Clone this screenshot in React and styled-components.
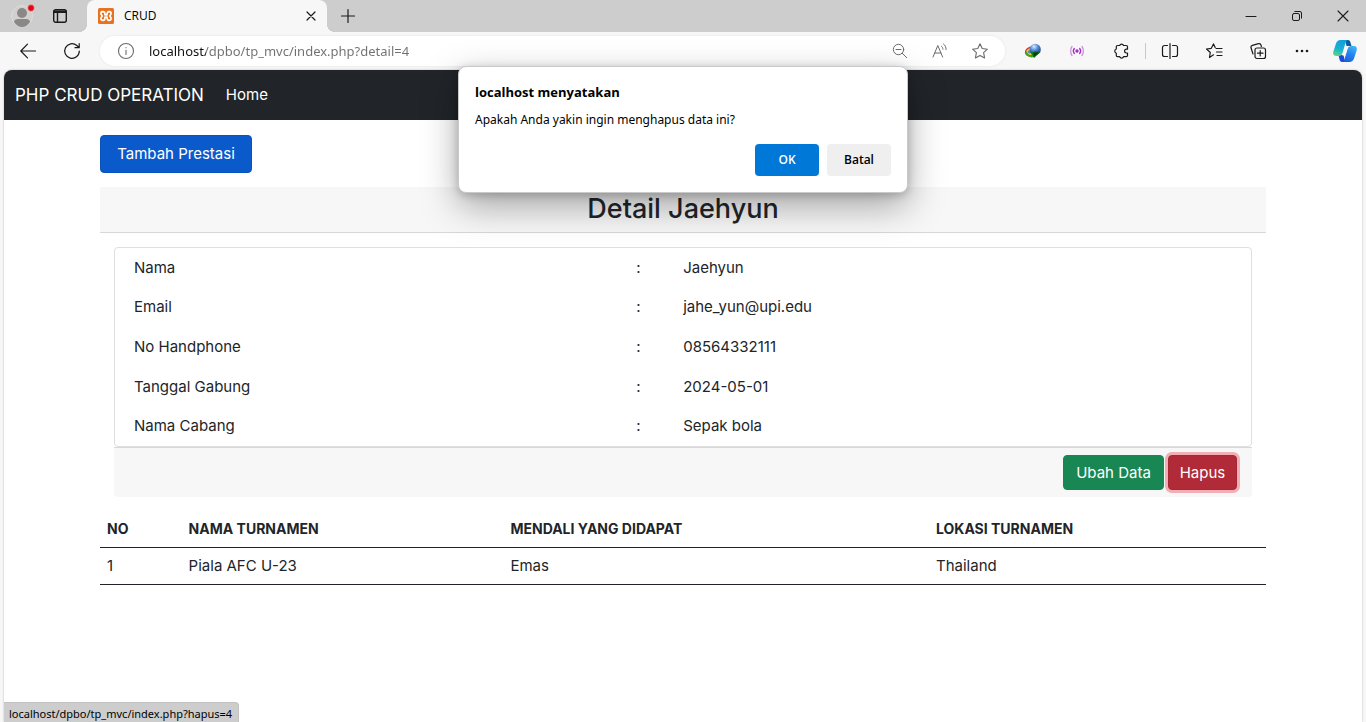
import React from "react";
import styled, { createGlobalStyle, css } from "styled-components";

const Global = createGlobalStyle`
  *, *::before, *::after { box-sizing: border-box; }
  body { margin: 0; background: #f7f7f7; }
  button, input { font: inherit; }
`;

const pageFont = css`font-family: Inter, "Open Sans", sans-serif;`;
const wideUiFont = css`font-family: "Noto Sans", "Open Sans", sans-serif;`;

const Window = styled.div`
  display: flex;
  flex-direction: column;
  min-height: 100vh;
  position: relative;
  overflow: hidden;
  font-family: "Open Sans", "Noto Sans", sans-serif;
  font-size: 12px;
  color: #000;
`;

const TabStrip = styled.header`
  display: flex;
  height: 32px;
  background: #cdcdcd;
`;

const StripButtons = styled.div`
  display: flex;
  width: 87px;
  padding-left: 3px;
`;

const IconButton = styled.button`
  display: flex;
  align-items: center;
  justify-content: center;
  flex: none;
  width: ${(p) => p.$w || 44}px;
  height: 100%;
  padding: 0;
  border: 0;
  background: transparent;
  color: ${(p) => p.$color || "#1b1b1b"};
  svg { display: block; overflow: visible; }
`;

const Tab = styled.div`
  display: flex;
  align-items: center;
  width: 240px;
  padding-left: 11px;
  position: relative;
  background: #f7f7f7;
  border-radius: 8px 8px 0 0;
  &::before, &::after {
    content: "";
    position: absolute;
    bottom: 0;
    width: 8px;
    height: 8px;
  }
  &::before { left: -8px; background: radial-gradient(circle at 0 0, transparent 8px, #f7f7f7 8px); }
  &::after { right: -8px; background: radial-gradient(circle at 100% 0, transparent 8px, #f7f7f7 8px); }
`;

const TabTitle = styled.span`
  flex: 1;
  margin-left: 10px;
  line-height: 32px;
`;

const WindowControls = styled.div`
  display: flex;
  margin-left: auto;
`;

const Toolbar = styled.div`
  display: flex;
  align-items: center;
  height: 38px;
  padding-left: 6px;
`;

const AddressBar = styled.div`
  display: flex;
  align-items: center;
  flex: 1;
  height: 30px;
  margin: 0 6px;
  padding: 0 5px 0 4px;
  border-radius: 15px;
  background: #fff;
  box-shadow: 0 0 3px rgba(0, 0, 0, 0.08);
`;

const AddressInput = styled.input`
  ${wideUiFont}
  flex: 1;
  min-width: 0;
  height: 30px;
  padding: 0 0 0 1px;
  border: 0;
  outline: 0;
  font-size: 13px;
  color: transparent;
  background: linear-gradient(90deg, #111 58px, #707070 58px);
  background-clip: text;
`;

const Separator = styled.div`
  width: 1px;
  height: 16px;
  margin: 0 2px;
  background: #c8c8c8;
`;

const Viewport = styled.div`
  ${pageFont}
  flex: 1;
  margin: 0 4px;
  overflow: hidden;
  border-radius: 8px 8px 0 0;
  background: #fff;
  box-shadow: 0 0 2px rgba(0, 0, 0, 0.3);
  color: #212529;
  font-size: 15px;
  line-height: 22px;
`;

const Navbar = styled.nav`
  display: flex;
  align-items: center;
  gap: 22px;
  height: 50px;
  padding: 0 11px;
  background: #212529;
`;

const NavLink = styled.a`
  color: #fff;
  text-decoration: none;
  font-size: ${(p) => (p.$brand ? 17 : 15)}px;
`;

const Container = styled.main`
  max-width: 1188px;
  margin: 0 auto;
  padding: 15px 11px;
`;

const Button = styled.button`
  ${pageFont}
  padding: 0 ${(p) => (p.$large ? 14 : 10)}px;
  height: ${(p) => (p.$large ? 38 : 35)}px;
  min-width: ${(p) => p.$min}px;
  border: 1px solid ${(p) => p.$border};
  border-radius: 4px;
  background: ${(p) => p.$bg};
  box-shadow: ${(p) => (p.$ring ? "0 0 0 3px rgba(239, 100, 116, 0.5)" : "none")};
  color: #fff;
  white-space: nowrap;
`;

const Heading = styled.h1`
  margin: 14px 0;
  height: 46px;
  border-bottom: 1px solid #d8d8d8;
  background: #f7f7f7;
  font-size: 27px;
  font-weight: 500;
  line-height: 43px;
  text-align: center;
`;

const Card = styled.section`
  margin: 0 14px 14px;
`;

const CardBody = styled.div`
  padding: 0 10px;
  border: 1px solid #dfdfdf;
  border-radius: 4px;
`;

const DetailTable = styled.table`
  width: 100%;
  height: 198px;
  border-collapse: collapse;
  table-layout: fixed;
  th, td {
    padding: 0 9px;
    text-align: left;
    font-weight: 400;
  }
  th { width: 45%; }
  td:nth-child(2) { width: 47px; }
`;

const CardFooter = styled.div`
  display: flex;
  justify-content: flex-end;
  gap: 4px;
  padding: 7px 15px 7px 0;
  border-top: 1px solid #d8d8d8;
  border-radius: 0 0 4px 4px;
  background: #f7f7f7;
`;

const DataTable = styled.table`
  width: 100%;
  border-collapse: collapse;
  table-layout: fixed;
  th, td {
    height: 37px;
    padding: 0 7px;
    border-bottom: 1px solid #212529;
    text-align: left;
  }
  th { height: 36px; font-weight: 700; font-size: 14px; }
  th:nth-child(1) { width: 7%; }
  th:nth-child(2) { width: 27.6%; }
  th:nth-child(3) { width: 36.5%; }
`;

const Dialog = styled.dialog`
  position: absolute;
  top: 66px;
  left: 0;
  right: 0;
  width: 450px;
  margin: 0 auto;
  padding: 15px 16px 16px;
  border: 1px solid #c9c9c9;
  border-radius: 8px;
  background: #fff;
  color: #000;
  box-shadow: 0 13px 36px rgba(0, 0, 0, 0.34), 0 2px 10px rgba(0, 0, 0, 0.2);
  line-height: 20px;
`;

const DialogTitle = styled.h2`
  margin: 0 0 8px;
  font-size: 13px;
  font-weight: 700;
`;

const DialogText = styled.p`
  ${wideUiFont}
  margin: 0 0 14px;
`;

const DialogActions = styled.div`
  display: flex;
  justify-content: flex-end;
  gap: 8px;
`;

const DialogButton = styled.button`
  width: 64px;
  height: 32px;
  padding: 0;
  border: 0;
  border-radius: 4px;
  background: ${(p) => (p.$primary ? "#0078d7" : "#efefef")};
  color: ${(p) => (p.$primary ? "#fff" : "#000")};
  font-size: 12px;
  font-weight: 600;
`;

const StatusBubble = styled.div`
  ${wideUiFont}
  position: absolute;
  left: 4px;
  bottom: 0;
  height: 20px;
  padding: 0 6px 0 5px;
  border: 1px solid #c2c2c2;
  border-width: 1px 1px 0 0;
  border-radius: 0 4px 0 0;
  background: #cdcdcd;
  font-size: 11px;
  line-height: 22px;
`;

const Line = ({ size = 16, sw = 1, children }) => (
  <svg width={size} height={size} viewBox={`0 0 ${size} ${size}`} fill="none" stroke="currentColor" strokeWidth={sw} strokeLinecap="round" strokeLinejoin="round" aria-hidden="true">
    {children}
  </svg>
);

const ProfileIcon = () => (
  <svg width="22" height="22" viewBox="0 0 22 22" aria-hidden="true">
    <circle cx="11" cy="11" r="10.5" fill="#d2d0ce" stroke="#dedbd8" />
    <circle cx="11" cy="8" r="5" fill="#8a8886" />
    <path d="M3 17c0-2 2-3 4-3h8c2 0 4 1 4 3-2 3-5 5-8 5s-6-2-8-5z" fill="#8a8886" />
    <circle cx="20" cy="3" r="3.4" fill="#e30613" stroke="#e4e0dd" strokeWidth=".6" />
  </svg>
);

const XamppIcon = () => (
  <svg width="16" height="16" viewBox="0 0 16 16" aria-hidden="true">
    <rect width="16" height="16" rx="1.500" fill="#e8731f" />
    <path
      d="M7 6.800h2C9 4.500 9.600 3.700 11 3.700c2.200 0 2.700 1.500 1.500 3.200L11.800 8l.7 1.100c1.200 1.700.7 3.200-1.500 3.200-1.400 0-2-.8-2-3.100H7c0 2.300-.6 3.100-2 3.100-2.200 0-2.700-1.500-1.500-3.200L4.200 8l-.7-1.100C2.300 5.200 2.800 3.700 5 3.700c1.400 0 2 .8 2 3.100z"
      fill="none"
      stroke="#fff"
      strokeWidth="1.700"
      strokeLinejoin="round"
    />
  </svg>
);

const DownloadIcon = () => (
  <svg width="16" height="16" viewBox="0 0 16 16" aria-hidden="true">
    <defs>
      <radialGradient id="globe" cx=".4" cy=".25" r=".8">
        <stop offset="0" stopColor="#d8ecff" />
        <stop offset=".45" stopColor="#4b86d8" />
        <stop offset="1" stopColor="#12347a" />
      </radialGradient>
    </defs>
    <ellipse cx="5.5" cy="8.5" rx="5" ry="4" transform="rotate(-25 5.5 8.5)" fill="#f5d21b" stroke="#d63a1e" strokeWidth="1.600" />
    <path d="M1 9c1 4 5 5 8 4" fill="none" stroke="#3aa528" strokeWidth="2" />
    <ellipse cx="5" cy="8.800" rx="2.200" ry="1.800" fill="#4b86d8" />
    <circle cx="10.2" cy="6.4" r="5.6" fill="url(#globe)" />
    <path d="M5 8.500c3 1 4 .5 5.500-.5l5 1-1.500 1.500L9 15l-1.800-3z" fill="#187a1b" />
    <path d="M8 9.500l6-.2-5 4.700z" fill="#083f12" />
  </svg>
);

const CopilotIcon = () => (
  <svg width="24" height="22" viewBox="0 0 24 22" aria-hidden="true">
    <defs>
      <linearGradient id="cpLeft" x1="0.5" y1="0" x2="0.2" y2="1">
        <stop offset="0" stopColor="#159be0" />
        <stop offset=".55" stopColor="#17b3d0" />
        <stop offset="1" stopColor="#62d67a" />
      </linearGradient>
      <linearGradient id="cpRight" x1="0.8" y1="0" x2="0.3" y2="1">
        <stop offset="0" stopColor="#43b6f5" />
        <stop offset=".5" stopColor="#2583ee" />
        <stop offset="1" stopColor="#1b5fe0" />
      </linearGradient>
    </defs>
    <path d="M12 0h3c1.500 0 2 1 2.400 2.200L18.500 6h-5z" fill="#0d5c96" />
    <path d="M12 22H9c-1.500 0-2-1-2.400-2.200L5.500 15h5z" fill="#1a49d8" />
    <path d="M7.500 0H15c-1.500 0-2 1.500-2.400 2.600L9.500 13c-.6 2-1.500 3-3.500 3H3c-2.500 0-3.300-2-2.700-4.200L3 3.500C3.800 1.200 5.200 0 7.500 0z" fill="url(#cpLeft)" />
    <path d="M16.500 22H9c1.500 0 2-1.500 2.400-2.600L14.500 9c.6-2 1.500-3 3.500-3h3c2.500 0 3.300 2 2.700 4.200L21 18.500c-.8 2.300-2.200 3.500-4.500 3.500z" fill="url(#cpRight)" />
    <path d="M13.200 6H17c-1.500.3-2.200 1.500-2.600 3l-2 6.500H9.200c1-.8 1.300-2 1.700-3.200z" fill="#f7f7f7" />
  </svg>
);

const details = [
  ["Nama", "Jaehyun"],
  ["Email", "jahe_yun@upi.edu"],
  ["No Handphone", "08564332111"],
  ["Tanggal Gabung", "2024-05-01"],
  ["Nama Cabang", "Sepak bola"],
];

const columns = ["NO", "NAMA TURNAMEN", "MENDALI YANG DIDAPAT", "LOKASI TURNAMEN"];
const rows = [["1", "Piala AFC U-23", "Emas", "Thailand"]];

function BrowserTabs() {
  return (
    <TabStrip>
      <StripButtons>
        <IconButton $w={38} aria-label="Profile"><ProfileIcon /></IconButton>
        <IconButton $w={38} aria-label="Tab actions">
          <Line size={14} sw={1.4}>
            <rect x=".7" y=".7" width="12.600" height="12.600" rx="2" />
            <path d="M1 2.200h12M1 3.400h12M4.500 4v9" />
          </Line>
        </IconButton>
      </StripButtons>
      <Tab>
        <XamppIcon />
        <TabTitle>CRUD</TabTitle>
        <IconButton $w={32} aria-label="Close tab">
          <Line size={8} sw={1.2}><path d="M0 0l8 8M8 0L0 8" /></Line>
        </IconButton>
      </Tab>
      <IconButton $w={42} aria-label="New tab">
        <Line size={14} sw={1.2}><path d="M7 .5v13M.5 7h13" /></Line>
      </IconButton>
      <WindowControls>
        <IconButton $w={46} aria-label="Minimize"><Line size={10}><path d="M0 5.500h10" /></Line></IconButton>
        <IconButton $w={46} aria-label="Restore">
          <Line size={10}>
            <rect x=".5" y="2.500" width="7" height="7" rx="1.500" />
            <path d="M2.800.5H8A1.500 1.500 0 0 1 9.500 2v5.200" />
          </Line>
        </IconButton>
        <IconButton $w={46} aria-label="Close"><Line size={10} sw={1.1}><path d="M0 0l10 10M10 0L0 10" /></Line></IconButton>
      </WindowControls>
    </TabStrip>
  );
}

function BrowserToolbar() {
  return (
    <Toolbar>
      <IconButton aria-label="Back"><Line sw={1.2}><path d="M15.500 8H.8M7.500 1.200L.8 8l6.700 6.800" /></Line></IconButton>
      <IconButton aria-label="Refresh">
        <Line sw={1.200}><path d="M15.300 8A7.300 7.300 0 1 1 12.800 2.500L15 4.500M15.200.5v4.200H11" /></Line>
      </IconButton>
      <AddressBar>
        <IconButton $color="#6b6b6b" aria-label="Site information">
          <Line sw={1.100}><circle cx="8" cy="8" r="7.500" /><path d="M8 7.200v4.300M8 4.500v.3" /></Line>
        </IconButton>
        <AddressInput aria-label="Address" defaultValue="localhost/dpbo/tp_mvc/index.php?detail=4" />
        <IconButton $w={40} $color="#6b6b6b" aria-label="Zoom out">
          <Line size={14}><circle cx="5.500" cy="5.500" r="5.200" /><path d="M3 5.500h5M9.300 9.300l4.400 4.400" /></Line>
        </IconButton>
        <IconButton $w={40} $color="#6b6b6b" aria-label="Read aloud">
          <Line><path d="M1 14L5.800 2.500 10.600 14M2.700 10h6.200M9.500 3.200c1 .8 1.400 1.800 1.400 3M11.500 1c1.800 1.300 2.600 3.300 2.600 5.500" /></Line>
        </IconButton>
        <IconButton $w={40} $color="#6b6b6b" aria-label="Add to favorites">
          <Line sw={1.100}><path d="M8 .8l2.200 4.700 5.200.7-3.800 3.500 1 5.200L8 12.400l-4.600 2.500 1-5.200L.6 6.200l5.200-.7z" /></Line>
        </IconButton>
      </AddressBar>
      <IconButton aria-label="Download manager"><DownloadIcon /></IconButton>
      <IconButton $color="#a32cc4" aria-label="Recorder">
        <Line size={14} sw={1.300}>
          <circle cx="7" cy="7" r="1" fill="currentColor" />
          <path d="M4.300 4.500c-1.200 1.500-1.200 3.500 0 5M9.700 4.500c1.200 1.500 1.200 3.500 0 5" />
          <path opacity=".5" d="M2 2.500C.2 5 .2 9 2 11.500M12 2.500c1.800 2.500 1.800 6.500 0 9" />
        </Line>
      </IconButton>
      <IconButton aria-label="Extensions">
        <Line sw={1.200}><path d="M4.500 2.500h2.200a2 2 0 0 1 3.800 0h2.800a1.200 1.200 0 0 1 1.200 1.200v2.500h-1a1.900 1.900 0 0 0 0 3.800h1v2.500a1.200 1.200 0 0 1-1.200 1.200h-2.800a2 2 0 0 1-3.800 0H4.500a1.200 1.200 0 0 1-1.200-1.200V10.200a2.200 2.200 0 0 1 0-4.200V3.700a1.200 1.200 0 0 1 1.200-1.200z" /></Line>
      </IconButton>
      <Separator />
      <IconButton aria-label="Split screen">
        <Line sw={1.200}><path d="M5.500 2.500H2.500A2 2 0 0 0 .5 4.500v7a2 2 0 0 0 2 2h3M10.500 2.500h3a2 2 0 0 1 2 2v7a2 2 0 0 1-2 2h-3M8 .5v15" /></Line>
      </IconButton>
      <IconButton aria-label="Favorites">
        <Line sw={1.200}><path d="M10 5.500h6M10.500 9h5.500M11 12.500h5M7.500 11.800l-4 2.700.8-5L.5 6l4.800-.7L7.500.9l1.700 3.600" /></Line>
      </IconButton>
      <IconButton aria-label="Collections">
        <Line sw={1.200}>
          <path d="M3 11L1 4.800a2 2 0 0 1 1.400-2.500L8.500.7A2 2 0 0 1 11 2.100l.4 1.400" />
          <rect x="5" y="5" width="10.500" height="10.500" rx="2" />
          <path d="M10.200 7.500v5.500M7.500 10.200H13" />
        </Line>
      </IconButton>
      <IconButton aria-label="Settings and more">
        <svg width="14" height="14" viewBox="0 0 14 14" fill="currentColor" aria-hidden="true">
          <circle cx="2" cy="7" r="1.300" />
          <circle cx="7" cy="7" r="1.300" />
          <circle cx="12" cy="7" r="1.300" />
        </svg>
      </IconButton>
      <IconButton $w={42} aria-label="Copilot"><CopilotIcon /></IconButton>
    </Toolbar>
  );
}

export default function App() {
  return (
    <Window>
      <Global />
      <BrowserTabs />
      <BrowserToolbar />
      <Viewport>
        <Navbar>
          <NavLink $brand href="#top">PHP CRUD OPERATION</NavLink>
          <NavLink href="#home">Home</NavLink>
        </Navbar>
        <Container>
          <Button $large $min={152} $bg="#0b5acb" $border="#0a53be">Tambah Prestasi</Button>
          <Heading>Detail Jaehyun</Heading>
          <Card>
            <CardBody>
              <DetailTable>
                <tbody>
                  {details.map(([label, value]) => (
                    <tr key={label}>
                      <th scope="row">{label}</th>
                      <td>:</td>
                      <td>{value}</td>
                    </tr>
                  ))}
                </tbody>
              </DetailTable>
            </CardBody>
            <CardFooter>
              <Button $min={101} $bg="#198754" $border="#198754">Ubah Data</Button>
              <Button $min={69} $ring $bg="#b02a37" $border="#a52834">Hapus</Button>
            </CardFooter>
          </Card>
          <DataTable>
            <thead>
              <tr>{columns.map((c) => <th scope="col" key={c}>{c}</th>)}</tr>
            </thead>
            <tbody>
              {rows.map((r) => (
                <tr key={r[0]}>{r.map((c) => <td key={c}>{c}</td>)}</tr>
              ))}
            </tbody>
          </DataTable>
        </Container>
      </Viewport>
      <Dialog open aria-labelledby="dialog-title">
        <DialogTitle id="dialog-title">localhost menyatakan</DialogTitle>
        <DialogText>Apakah Anda yakin ingin menghapus data ini?</DialogText>
        <DialogActions>
          <DialogButton $primary>OK</DialogButton>
          <DialogButton>Batal</DialogButton>
        </DialogActions>
      </Dialog>
      <StatusBubble>localhost/dpbo/tp_mvc/index.php?hapus=4</StatusBubble>
    </Window>
  );
}
